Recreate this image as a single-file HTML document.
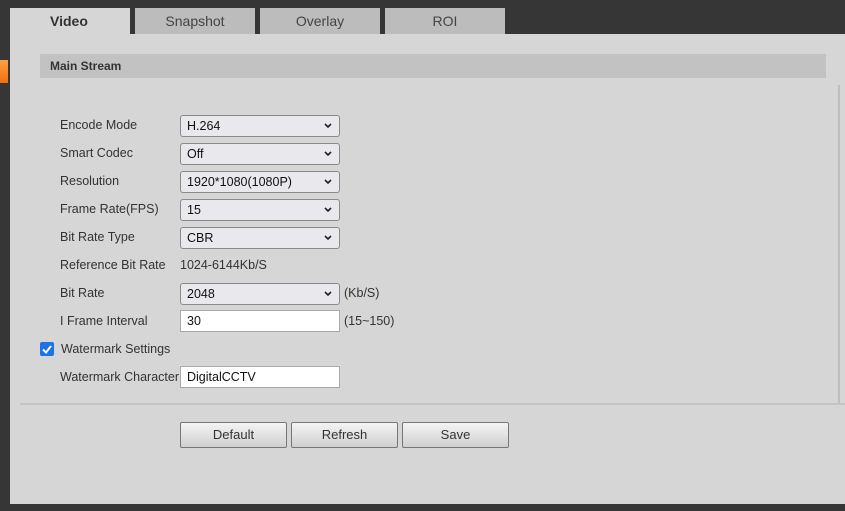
<!DOCTYPE html>
<html><head><meta charset="utf-8"><style>
*{box-sizing:border-box;margin:0;padding:0}
body{width:845px;height:511px;background:#363636;font-family:"Liberation Sans",Arial,sans-serif;position:relative;overflow:hidden;color:#333;font-size:12px}
.abs{position:absolute}
.panel{left:10px;top:34px;width:835px;height:470px;background:#d6d6d6}
.tab{top:8px;height:26px;width:120px;background:#bcbcbc;text-align:center;line-height:26px;font-size:14px;color:#444}
.tab.on{background:#d6d6d6;font-weight:bold;color:#333;text-align:left;padding-left:40px}
.bar{left:40px;top:54px;width:786px;height:24px;background:#c2c2c2;font-weight:bold;line-height:24px;padding-left:10px;color:#333;font-size:12px}
.lbl{left:60px;font-size:12.5px;color:#333}
.sel{left:180px;width:160px;height:22px;background:#e9e9ed;border:1px solid #8a8a8a;border-radius:3px;font-size:12.5px;line-height:20px;padding-left:6px;color:#111}
.sel svg{position:absolute;right:7px;top:7px}
.inp{left:180px;width:160px;height:22px;background:#fff;border:1px solid #aaa;font-size:12.5px;line-height:20px;padding-left:6px;color:#111}
.btn{top:422px;width:107px;height:26px;border:1px solid #777;border-radius:2px;background:linear-gradient(#f4f4f4,#d0d0d0);text-align:center;line-height:24px;font-size:13px;color:#333}
</style></head><body>
<div class="abs panel"></div>
<div class="abs" style="left:0;top:60px;width:8px;height:23px;background:linear-gradient(#ffa040,#f07010)"></div>
<div class="abs tab on" style="left:10px">Video</div>
<div class="abs tab" style="left:135px">Snapshot</div>
<div class="abs tab" style="left:260px">Overlay</div>
<div class="abs tab" style="left:385px">ROI</div>
<div class="abs bar">Main Stream</div>
<div class="abs" style="left:838px;top:85px;width:2px;height:320px;background:#bdbdbd"></div>

<div class="abs lbl" style="top:118px">Encode Mode</div>
<div class="abs sel" style="top:115px">H.264<svg width="8" height="6"><path d="M1 1L4 4L7 1" stroke="#222" stroke-width="1.6" fill="none"/></svg></div>
<div class="abs lbl" style="top:146px">Smart Codec</div>
<div class="abs sel" style="top:143px">Off<svg width="8" height="6"><path d="M1 1L4 4L7 1" stroke="#222" stroke-width="1.6" fill="none"/></svg></div>
<div class="abs lbl" style="top:174px">Resolution</div>
<div class="abs sel" style="top:171px">1920*1080(1080P)<svg width="8" height="6"><path d="M1 1L4 4L7 1" stroke="#222" stroke-width="1.6" fill="none"/></svg></div>
<div class="abs lbl" style="top:202px">Frame Rate(FPS)</div>
<div class="abs sel" style="top:199px">15<svg width="8" height="6"><path d="M1 1L4 4L7 1" stroke="#222" stroke-width="1.6" fill="none"/></svg></div>
<div class="abs lbl" style="top:230px">Bit Rate Type</div>
<div class="abs sel" style="top:227px">CBR<svg width="8" height="6"><path d="M1 1L4 4L7 1" stroke="#222" stroke-width="1.6" fill="none"/></svg></div>
<div class="abs lbl" style="top:258px">Reference Bit Rate</div>
<div class="abs lbl" style="top:258px;left:180px">1024-6144Kb/S</div>
<div class="abs lbl" style="top:286px">Bit Rate</div>
<div class="abs sel" style="top:283px">2048<svg width="8" height="6"><path d="M1 1L4 4L7 1" stroke="#222" stroke-width="1.6" fill="none"/></svg></div>
<div class="abs lbl" style="top:286px;left:344px">(Kb/S)</div>
<div class="abs lbl" style="top:314px">I Frame Interval</div>
<div class="abs inp" style="top:310px">30</div>
<div class="abs lbl" style="top:314px;left:344px">(15~150)</div>
<div class="abs" style="left:40px;top:342px;width:14px;height:14px;background:#1a73e8;border-radius:2px"><svg width="14" height="14" style="position:absolute;left:0;top:0"><path d="M3 7.5L6 10.5L11 4" stroke="#fff" stroke-width="2" fill="none"/></svg></div>
<div class="abs lbl" style="top:342px;left:61px">Watermark Settings</div>
<div class="abs lbl" style="top:370px">Watermark Character</div>
<div class="abs inp" style="top:366px">DigitalCCTV</div>
<div class="abs" style="left:20px;top:403px;width:825px;height:2px;background:#c4c4c4"></div>
<div class="abs btn" style="left:180px">Default</div>
<div class="abs btn" style="left:291px">Refresh</div>
<div class="abs btn" style="left:402px">Save</div>
</body></html>
